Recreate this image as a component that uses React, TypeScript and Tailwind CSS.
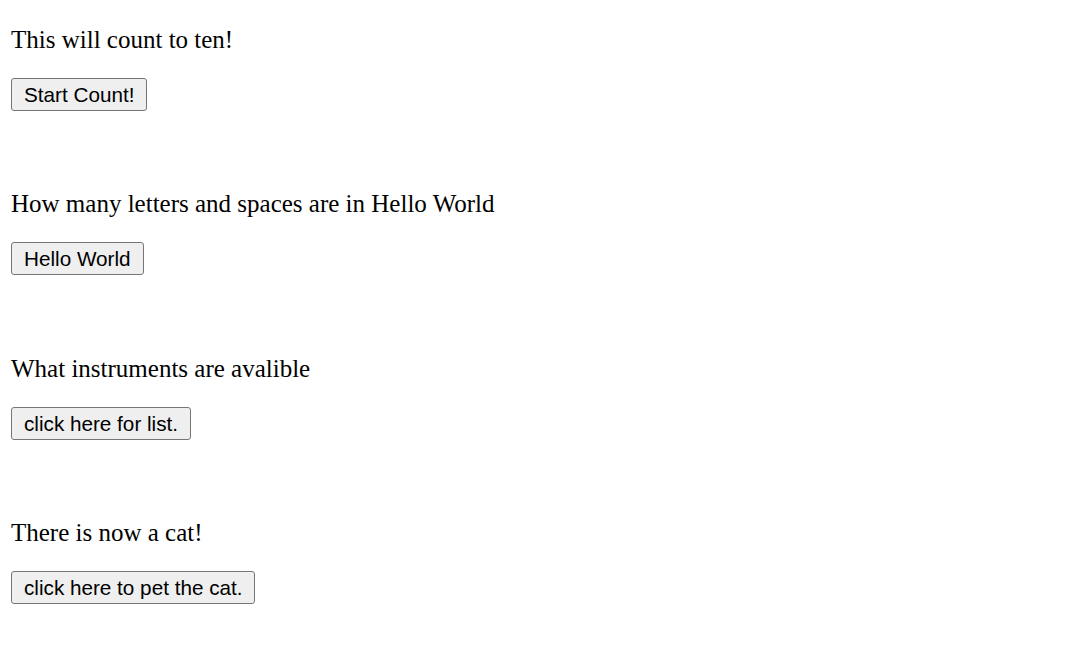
import React from 'react';

const sections = [
  { text: 'This will count to ten!', label: 'Start Count!' },
  { text: 'How many letters and spaces are in Hello World', label: 'Hello World' },
  { text: 'What instruments are avalible', label: 'click here for list.' },
  { text: 'There is now a cat!', label: 'click here to pet the cat.' },
];

const App = () => {
  return (
    <div className="min-h-screen bg-white px-[11px] pt-[25px] text-black">
      {sections.map((s) => (
        <div key={s.label} className="flex flex-col items-start pb-[78.3px]">
          <p className="m-0 font-['Liberation_Serif',serif] text-[25px] leading-[29px]">{s.text}</p>
          <button className="mt-[24px] rounded-[3px] border border-[#767676] bg-[#efefef] px-[12px] py-[4px] font-['Liberation_Sans',Arial,sans-serif] text-[20.7px] leading-[23px] text-black">
            {s.label}
          </button>
        </div>
      ))}
    </div>
  );
};

export default App;
